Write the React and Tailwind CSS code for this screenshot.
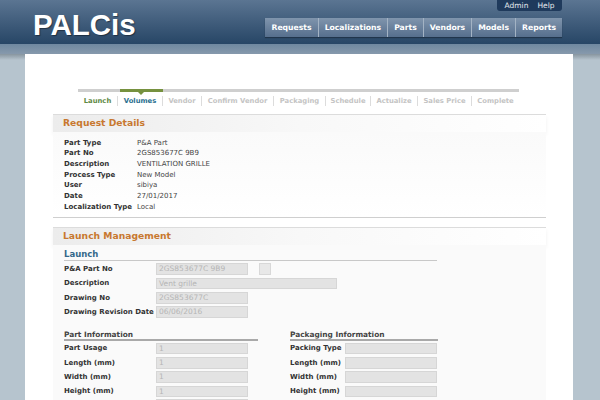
const navItems = ["Requests", "Localizations", "Parts", "Vendors", "Models", "Reports"];

const steps = [
  { label: "Launch", color: "text-[#5f8a45]", width: "w-[40px]" },
  { label: "Volumes", color: "text-[#2a6f8f]", width: "w-[45px]" },
  { label: "Vendor", color: "text-[#c4c4c4]", width: "w-[39px]" },
  { label: "Confirm Vendor", color: "text-[#c4c4c4]", width: "w-[72px]" },
  { label: "Packaging", color: "text-[#c4c4c4]", width: "w-[52px]" },
  { label: "Schedule", color: "text-[#c4c4c4]", width: "w-[45px]" },
  { label: "Actualize", color: "text-[#c4c4c4]", width: "w-[47px]" },
  { label: "Sales Price", color: "text-[#c4c4c4]", width: "w-[54px]" },
  { label: "Complete", color: "text-[#c4c4c4]", width: "w-[47px]" },
];

const details = [
  ["Part Type", "P&A Part"],
  ["Part No", "2GS853677C 9B9"],
  ["Description", "VENTILATION GRILLE"],
  ["Process Type", "New Model"],
  ["User", "sibiya"],
  ["Date", "27/01/2017"],
  ["Localization Type", "Local"],
];

function SectionHead({ title }) {
  return (
    <div className="h-[18px] border-t border-[#dcdcdc] bg-gradient-to-r from-[#ececec] via-[#f8f8f8] to-white pl-[10px] text-[9.2px] leading-[16px] font-bold text-[#c8782f] shadow-[0_3px_4px_rgba(0,0,0,0.06)]">
      {title}
    </div>
  );
}

function Field({ label, value = "", labelWidth = "w-[92px]", inputWidth = "w-[92px]", children }) {
  return (
    <div className="flex h-[14.33px] items-center">
      <div className={`${labelWidth} text-[7px] font-bold whitespace-nowrap text-[#333]`}>{label}</div>
      <div className={`${inputWidth} h-[11.5px] shrink-0 border border-[#d6d6d6] bg-[#e3e3e3] pl-[2px] text-[7.5px] leading-[10px] text-[#b5b5b5]`}>
        {value}
      </div>
      {children}
    </div>
  );
}

export default function App() {
  return (
    <div className="h-[400px] w-[600px] overflow-hidden bg-[#b6c4ce] bg-[linear-gradient(#b6c4ce_54px,#87959f_54px,#b6c4ce_60px)] font-['DejaVu_Sans',sans-serif]">
      <header className="flex h-[44px] justify-between bg-gradient-to-b from-[#5b7592] to-[#274666] pr-[38px] pl-[33px]">
        <div className="pt-[9px] font-['Liberation_Sans',sans-serif] text-[29.5px] leading-[32px] font-bold text-white [text-shadow:1px_1px_1px_rgba(0,0,0,0.4)]">
          PALCis
        </div>
        <div className="flex flex-col items-end">
          <div className="flex h-[11px] w-[65px] items-center justify-center gap-[9px] rounded-b-[3px] bg-[#1f3a5c] text-[7.5px] text-[#e6ebf0]">
            <span>Admin</span>
            <span>Help</span>
          </div>
          <nav className="mt-[7px] flex h-[19px] items-center bg-gradient-to-b from-[#8095ad] to-[#566f8d] text-[7.7px] font-bold text-white shadow-[0_1px_1px_rgba(0,0,0,0.3)]">
            {navItems.map((item) => (
              <div key={item} className="flex h-full items-center border-r border-[#a3b3c4] px-[6px] whitespace-nowrap last:border-r-0">
                {item}
              </div>
            ))}
          </nav>
        </div>
      </header>
      <div className="h-[10px] bg-gradient-to-b from-[#6f88a0] to-[#8699ac]" />
      <main className="mr-[27px] ml-[25px] h-[346px] bg-white pt-[35px]">
        <div className="mr-[27px] ml-[28px]">
          <div className="relative ml-[25px] h-[3px] w-[441px] bg-[#cfcfcf]">
            <div className="absolute top-0 left-[42px] h-[3px] w-[43px] bg-[#76913f]" />
            <div className="absolute top-[3px] left-[60px] h-0 w-0 border-x-[3px] border-t-[3px] border-x-transparent border-t-[#76913f]" />
          </div>
          <div className="ml-[25px] flex h-[22px] items-center pb-[4px] text-[6.8px] font-bold">
            {steps.map((step) => (
              <div key={step.label} className={`${step.width} ${step.color} flex h-[10px] shrink-0 items-center justify-center border-r border-[#dcdcdc] leading-none whitespace-nowrap last:border-r-0`}>
                {step.label}
              </div>
            ))}
          </div>

          <SectionHead title="Request Details" />
          <div className="h-[86px] border-b border-[#cfcfcf] bg-gradient-to-b from-[#fafafa] to-white pt-[5.5px] pl-[11px]">
            {details.map(([label, value]) => (
              <div key={label} className="flex h-[10.7px] items-center">
                <div className="w-[73px] text-[7px] font-bold whitespace-nowrap text-[#333]">{label}</div>
                <div className="text-[7px] whitespace-nowrap text-[#444]">{value}</div>
              </div>
            ))}
          </div>

          <div className="mt-[9px]">
            <SectionHead title="Launch Management" />
          </div>
          <div className="h-[200px] bg-[#fafafa] pl-[11px]">
            <div className="h-[16px] w-[373px] border-b border-[#c8c8c8] pt-[4px] text-[8.5px] leading-[11px] font-bold text-[#35688a]">
              Launch
            </div>
            <div className="pt-[1px]">
              <Field label="P&A Part No" value="2GS853677C 9B9">
                <div className="ml-[11px] h-[12px] w-[12px] border border-[#d8d8d8] bg-[#e8e8e8]" />
              </Field>
              <Field label="Description" value="Vent grille" inputWidth="w-[181px]" />
              <Field label="Drawing No" value="2GS853677C" />
              <Field label="Drawing Revision Date" value="06/06/2016" />
            </div>
            <div className="mt-[11px] flex">
              <div className="w-[194px]">
                <div className="h-[11px] w-[194px] border-b-2 border-[#a9a9a9] text-[7.4px] leading-[9px] font-bold text-[#444]">
                  Part Information
                </div>
                <Field label="Part Usage" value="1" />
                <Field label="Length (mm)" value="1" />
                <Field label="Width (mm)" value="1" />
                <Field label="Height (mm)" value="1" />
              </div>
              <div className="ml-[32px] w-[148px]">
                <div className="h-[11px] border-b-2 border-[#a9a9a9] text-[7.4px] leading-[9px] font-bold text-[#444]">
                  Packaging Information
                </div>
                <Field label="Packing Type" labelWidth="w-[55px]" />
                <Field label="Length (mm)" labelWidth="w-[55px]" />
                <Field label="Width (mm)" labelWidth="w-[55px]" />
                <Field label="Height (mm)" labelWidth="w-[55px]" />
              </div>
            </div>
            <div className="ml-[92px] h-[2px] w-[92px] border border-[#d6d6d6] bg-[#e3e3e3]" />
          </div>
        </div>
      </main>
    </div>
  );
}
